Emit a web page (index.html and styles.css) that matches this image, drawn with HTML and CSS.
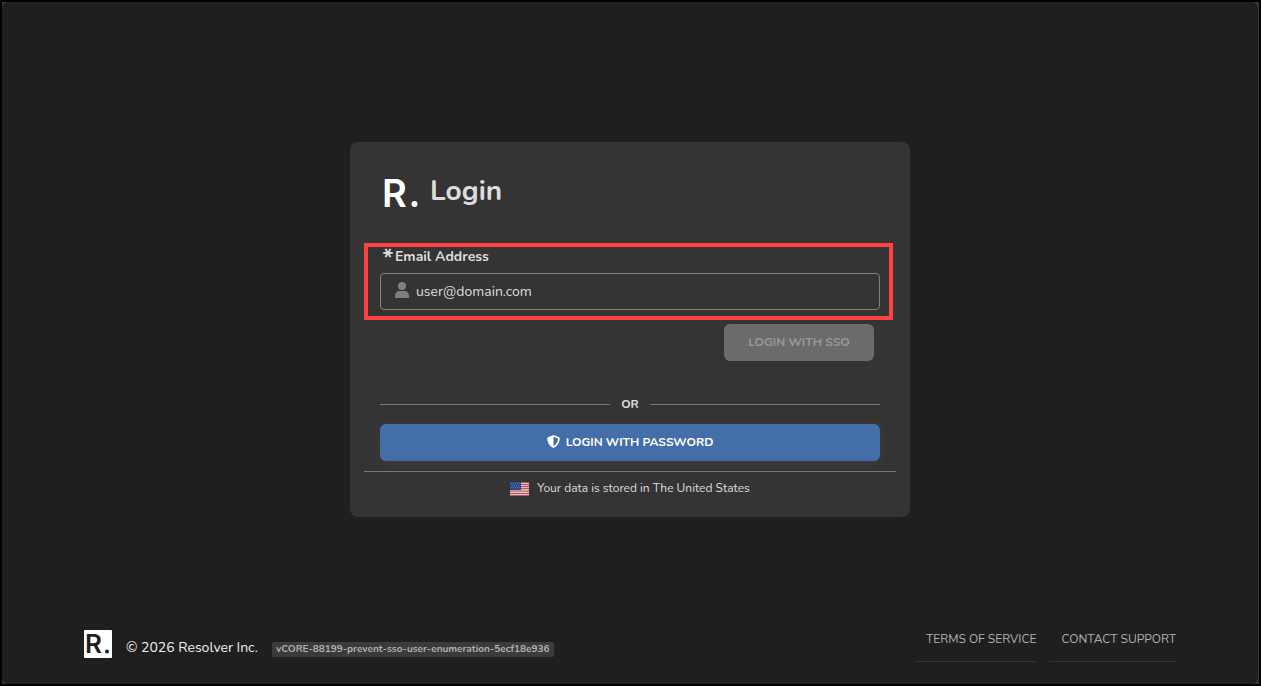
FILE: index.html
```
<!DOCTYPE html>
<html lang="en">
<head>
    <meta charset="utf-8">
    <title>Login</title>
    <link rel="stylesheet" href="styles.css">
</head>
<body>
<div class="page">
    <main class="login-card">
        <header class="login-header">
            <svg class="logo" viewBox="0 0 42 42" aria-hidden="true">
                <text x="2" y="35" class="logo-letter">R</text>
                <circle cx="34.500" cy="32" r="3"/>
            </svg>
            <h1>Login</h1>
        </header>
        <form class="login-form">
            <div class="field">
                <label for="email"><span class="required">*</span>Email Address</label>
                <div class="input-box">
                    <svg class="user-icon" viewBox="0 0 14 16" aria-hidden="true">
                        <circle cx="7" cy="4" r="4"/>
                        <path d="M0 16v-2c0-3 2-5 5-5h4c3 0 5 2 5 5v2z"/>
                    </svg>
                    <input type="text" id="email" name="email" value="user@domain.com">
                </div>
            </div>
            <button type="submit" class="btn btn-sso" disabled>LOGIN WITH SSO</button>
            <div class="divider">OR</div>
            <button type="button" class="btn btn-password">
                <svg class="shield-icon" viewBox="0 0 12 12" aria-hidden="true">
                    <path fill-rule="evenodd" d="M6 0l5 2c.6.2.8.6.8 1C11.700 7 9.500 10.500 6 12 2.500 10.500.3 7 .2 3c0-.4.2-.8.800-1zM6 1.600v8.700c2.500-1.300 4-3.900 4.200-7z"/>
                </svg>
                LOGIN WITH PASSWORD
            </button>
        </form>
        <p class="region">
            <svg class="flag" viewBox="0 0 19 14" aria-hidden="true">
                <path fill="#d8c4c7" d="M0 0h19v14H0z"/>
                <path stroke="#b9505a" d="M0 .5h19M0 2.500h19M0 4.500h19M0 6.500h19M0 9h19M0 11.500h19M0 13.500h19"/>
                <path fill="#304b82" d="M0 0h11v8H0z"/>
                <path stroke="#526da0" stroke-dasharray="1 1" d="M1 1.500h9M2 3.500h8M1 5.500h9"/>
            </svg>
            Your data is stored in The United States
        </p>
    </main>
    <footer class="footer">
        <svg class="footer-logo" viewBox="0 0 28 28" aria-hidden="true">
            <rect width="28" height="28" rx="1"/>
            <text x="1" y="23" class="footer-letter">R</text>
            <circle cx="23" cy="21.500" r="2"/>
        </svg>
        <span class="copyright">© 2026 Resolver Inc.</span>
        <span class="version">vCORE-88199-prevent-sso-user-enumeration-5ecf18e936</span>
        <nav class="footer-links">
            <a href="#">TERMS OF SERVICE</a>
            <a href="#">CONTACT SUPPORT</a>
        </nav>
    </footer>
</div>
</body>
</html>
```
FILE: styles.css
```
* {
    box-sizing: border-box;
}
body {
    display: flex;
    min-height: 100vh;
    margin: 0;
    padding-right: 1px;
    border: 2px solid #000000;
    background: #3a3a3a;
    color: #dddddd;
    font-family: Nunito, Lato, sans-serif;
    font-size: 14px;
}
.page {
    display: flex;
    flex: 1;
    flex-direction: column;
    border-radius: 6px;
    background: #1f1f1f;
}
.login-card {
    width: 560px;
    max-width: 100%;
    margin: 140px auto 40px;
    padding: 30px 30px 12px;
    border-radius: 8px;
    background: #343434;
}
.login-header {
    display: flex;
    align-items: center;
    height: 42px;
}
.logo {
    width: 42px;
    height: 42px;
    margin-right: 8px;
    overflow: visible;
    fill: #ffffff;
}
.logo-letter {
    font: 600 38px Inter, sans-serif;
}
.login-header h1 {
    margin: 0 0 4px;
    font-size: 28px;
    line-height: 38px;
}
.field {
    position: relative;
    margin-top: 32px;
}
.field::before {
    content: "";
    position: absolute;
    inset: -3px -13px -10px -16px;
    border: 4px solid #ff4141;
    pointer-events: none;
}
.field label {
    display: flex;
    height: 27px;
    padding-left: 2px;
    font-weight: bold;
    line-height: 22px;
}
.required {
    width: 13px;
    font-size: 26px;
    font-weight: 600;
    line-height: 26px;
}
.input-box {
    display: flex;
    align-items: center;
    height: 37px;
    padding: 0 14px;
    border: 1px solid #808080;
    border-radius: 4px;
}
.user-icon {
    width: 14px;
    height: 16px;
    margin: 0 7px 4px 0;
    fill: #808080;
}
.input-box input {
    flex: 1;
    min-width: 0;
    padding: 0;
    border: 0;
    outline: 0;
    background: none;
    color: #dddddd;
    font: inherit;
}
.btn {
    display: flex;
    align-items: center;
    justify-content: center;
    height: 37px;
    padding: 0 0 2px;
    border: 0;
    border-radius: 6px;
    font: bold 12px Nunito, Lato, sans-serif;
}
.btn-sso {
    width: 150px;
    margin: 14px 6px 0 auto;
    background: #6b6b6b;
    color: #999999;
}
.divider {
    display: flex;
    align-items: center;
    gap: 11px;
    margin: 35px 0 12px;
    font-size: 12px;
    font-weight: bold;
    line-height: 16px;
}
.divider::before,
.divider::after {
    content: "";
    flex: 1;
    height: 1px;
    background: #777777;
}
.btn-password {
    width: 100%;
    background: #436ea8;
    box-shadow: 0 2px 8px #3f3f3f;
    color: #ffffff;
}
.shield-icon {
    width: 13px;
    height: 13px;
    margin-right: 6px;
    fill: #ffffff;
}
.region {
    display: flex;
    align-items: center;
    justify-content: center;
    margin: 10px -16px 0;
    padding: 8px 0;
    border-top: 1px solid #777777;
    font-size: 12px;
    line-height: 17px;
}
.flag {
    width: 19px;
    height: 14px;
    margin-right: 8px;
}
.footer {
    display: flex;
    align-items: flex-end;
    margin-top: auto;
    padding: 0 82px 22px;
}
.footer-logo {
    width: 28px;
    height: 28px;
    margin: 0 14px 4px 0;
    overflow: visible;
    fill: #ffffff;
}
.footer-letter {
    fill: #1f1f1f;
    font: 600 26px Inter, sans-serif;
}
.footer-logo circle {
    fill: #1f1f1f;
}
.copyright {
    margin: 0 14px 4px 0;
    color: #f0f0f0;
    line-height: 20px;
}
.version {
    margin-bottom: 5px;
    padding: 0 4px;
    border-radius: 2px;
    background: #3b3b3b;
    color: #b0b0b0;
    font-size: 10px;
    font-weight: bold;
    line-height: 15px;
}
.footer-links {
    display: flex;
    gap: 13px;
    margin-left: auto;
}
.footer-links a {
    padding: 0 0 14px 12px;
    border-bottom: 1px solid #343434;
    color: #b0b0b0;
    font-size: 12px;
    line-height: 16px;
    text-decoration: none;
}
```
